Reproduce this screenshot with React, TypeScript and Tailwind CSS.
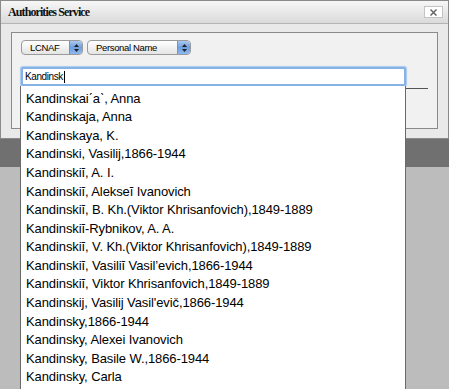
import React from "react";

const items = [
  "Kandinskai\u02CAa\u02CB, Anna",
  "Kandinskaja, Anna",
  "Kandinskaya, K.",
  "Kandinski, Vasilij,1866-1944",
  "Kandinski\u012D, A. I.",
  "Kandinski\u012D, Alekse\u012D Ivanovich",
  "Kandinski\u012D, B. Kh.(Viktor Khrisanfovich),1849-1889",
  "Kandinski\u012D-Rybnikov, A. A.",
  "Kandinski\u012D, V. Kh.(Viktor Khrisanfovich),1849-1889",
  "Kandinski\u012D, Vasili\u012D Vasil\u2019evich,1866-1944",
  "Kandinski\u012D, Viktor Khrisanfovich,1849-1889",
  "Kandinskij, Vasilij Vasil'evi\u010D,1866-1944",
  "Kandinsky,1866-1944",
  "Kandinsky, Alexei Ivanovich",
  "Kandinsky, Basile W.,1866-1944",
  "Kandinsky, Carla",
];

function Stepper() {
  return (
    <div className="flex h-full w-[13px] flex-col items-center justify-center gap-[2px] rounded-r-[3px] bg-gradient-to-b from-[#a9c8f0] via-[#6d9fe0] to-[#8cb8ee] border-l border-[#7a92b8]">
      <svg width="5" height="3" viewBox="0 0 5 3"><path d="M2.5 0 L5 3 L0 3 Z" fill="#222" /></svg>
      <svg width="5" height="3" viewBox="0 0 5 3"><path d="M0 0 L5 0 L2.5 3 Z" fill="#222" /></svg>
    </div>
  );
}

function Select({ label, width }: { label: string; width: string }) {
  return (
    <div className={`flex h-[15px] items-stretch overflow-hidden rounded-[4px] border border-[#9a9a9a] bg-gradient-to-b from-white to-[#e4e4e4] ${width}`}>
      <div className="flex flex-1 items-center pl-[8px] text-[9.5px] tracking-[-0.35px] leading-none text-black">{label}</div>
      <Stepper />
    </div>
  );
}

export default function App() {
  return (
    <div className="relative h-[389px] w-[449px] overflow-hidden bg-[#bcbcbc] font-['Liberation_Sans',Arial,sans-serif]">
      <div className="h-[139px] border border-[#8a8a8a] bg-[#e9e9e9]">
        <div className="flex h-[23px] items-center justify-between border-b border-[#b4b4b4] bg-gradient-to-b from-[#f7f7f7] to-[#dadada] pl-[7px] pr-[5px]">
          <span className="font-['Liberation_Serif',serif] text-[12px] tracking-[-0.9px] font-bold text-[#111]">Authorities Service</span>
          <div className="flex h-[12px] w-[19px] items-center justify-center border border-[#c4c4c4] bg-white">
            <svg width="7" height="7" viewBox="0 0 7 7"><path d="M0.5 0.5 L6.5 6.5 M6.5 0.5 L0.5 6.5" stroke="#666" strokeWidth="1.5" /></svg>
          </div>
        </div>
        <div className="ml-[10px] mr-[10px] mt-[8px] h-[97px] border border-[#8a8a8a] bg-[#f1f1f1] pl-[9px] pt-[7px]">
          <div className="flex gap-[4px]">
            <Select label="LCNAF" width="w-[62px]" />
            <Select label="Personal Name" width="w-[104px]" />
          </div>
          <div className="mt-[12px] flex h-[19px] w-[385px] items-center rounded-[2px] border-[2px] border-[#86b2e6] bg-white pl-[2px] shadow-[0_0_1px_1px_#a8c8ef]">
            <span className="text-[10px] tracking-[-0.4px] text-black">Kandinsk</span>
            <span className="ml-[1px] h-[12px] w-px bg-black" />
          </div>
          <div className="mt-[2px] h-px w-[407px] bg-[#555]" />
        </div>
      </div>
      <div className="h-[28px] bg-[#707070]" />
      <div className="absolute bottom-0 left-[20px] top-[86px] w-[386px] border-x border-[#6a6a6a] bg-white pl-[5px] pt-[3px]">
        {items.map((t) => (
          <div key={t} className="flex h-[18.6px] items-center whitespace-nowrap text-[13px] tracking-[-0.1px] text-black">
            {t}
          </div>
        ))}
      </div>
    </div>
  );
}
